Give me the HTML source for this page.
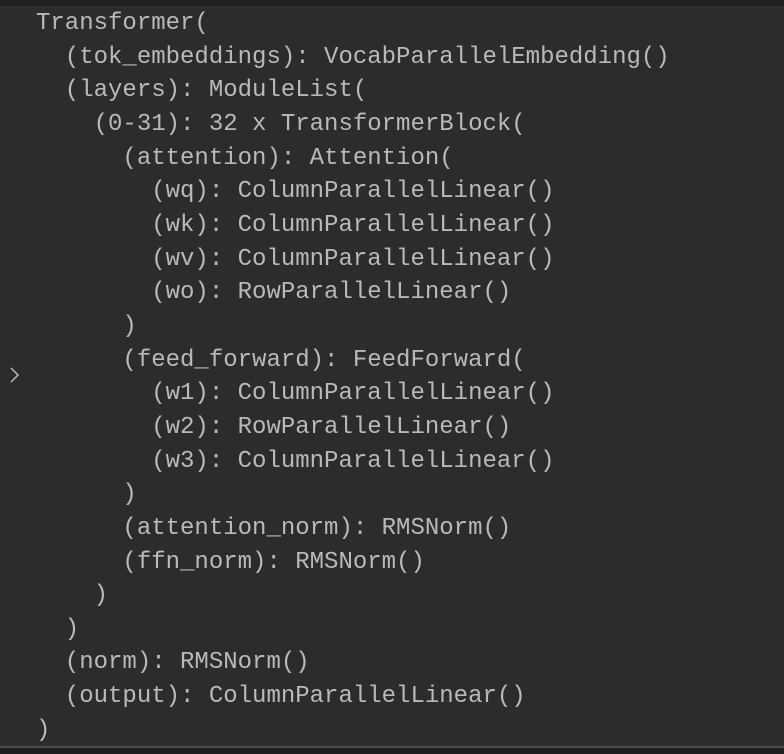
<!DOCTYPE html>
<html><head><style>
html,body{margin:0;padding:0;}
body{width:784px;height:754px;background:#2b2c2e;position:relative;overflow:hidden;}
.top{position:absolute;left:0;top:0;width:784px;height:6px;background:#1f2022;}
.bot{position:absolute;left:0;top:746px;width:784px;height:8px;background:#1f2022;border-top:2px solid #4a4b4d;box-sizing:border-box;}
pre{position:absolute;left:36px;top:7px;margin:0;font-family:"Liberation Mono",monospace;font-size:24px;line-height:33.65px;color:#b9b9b9;}
.chev{position:absolute;left:8px;top:366px;}
</style></head><body>
<div class="top"></div>
<pre>Transformer(
  (tok_embeddings): VocabParallelEmbedding()
  (layers): ModuleList(
    (0-31): 32 x TransformerBlock(
      (attention): Attention(
        (wq): ColumnParallelLinear()
        (wk): ColumnParallelLinear()
        (wv): ColumnParallelLinear()
        (wo): RowParallelLinear()
      )
      (feed_forward): FeedForward(
        (w1): ColumnParallelLinear()
        (w2): RowParallelLinear()
        (w3): ColumnParallelLinear()
      )
      (attention_norm): RMSNorm()
      (ffn_norm): RMSNorm()
    )
  )
  (norm): RMSNorm()
  (output): ColumnParallelLinear()
)</pre>
<svg class="chev" width="14" height="18" viewBox="0 0 14 18"><path d="M3 2 L10 9 L3 16" fill="none" stroke="#b9b9b9" stroke-width="1.5"/></svg>
<div class="bot"></div>
</body></html>
